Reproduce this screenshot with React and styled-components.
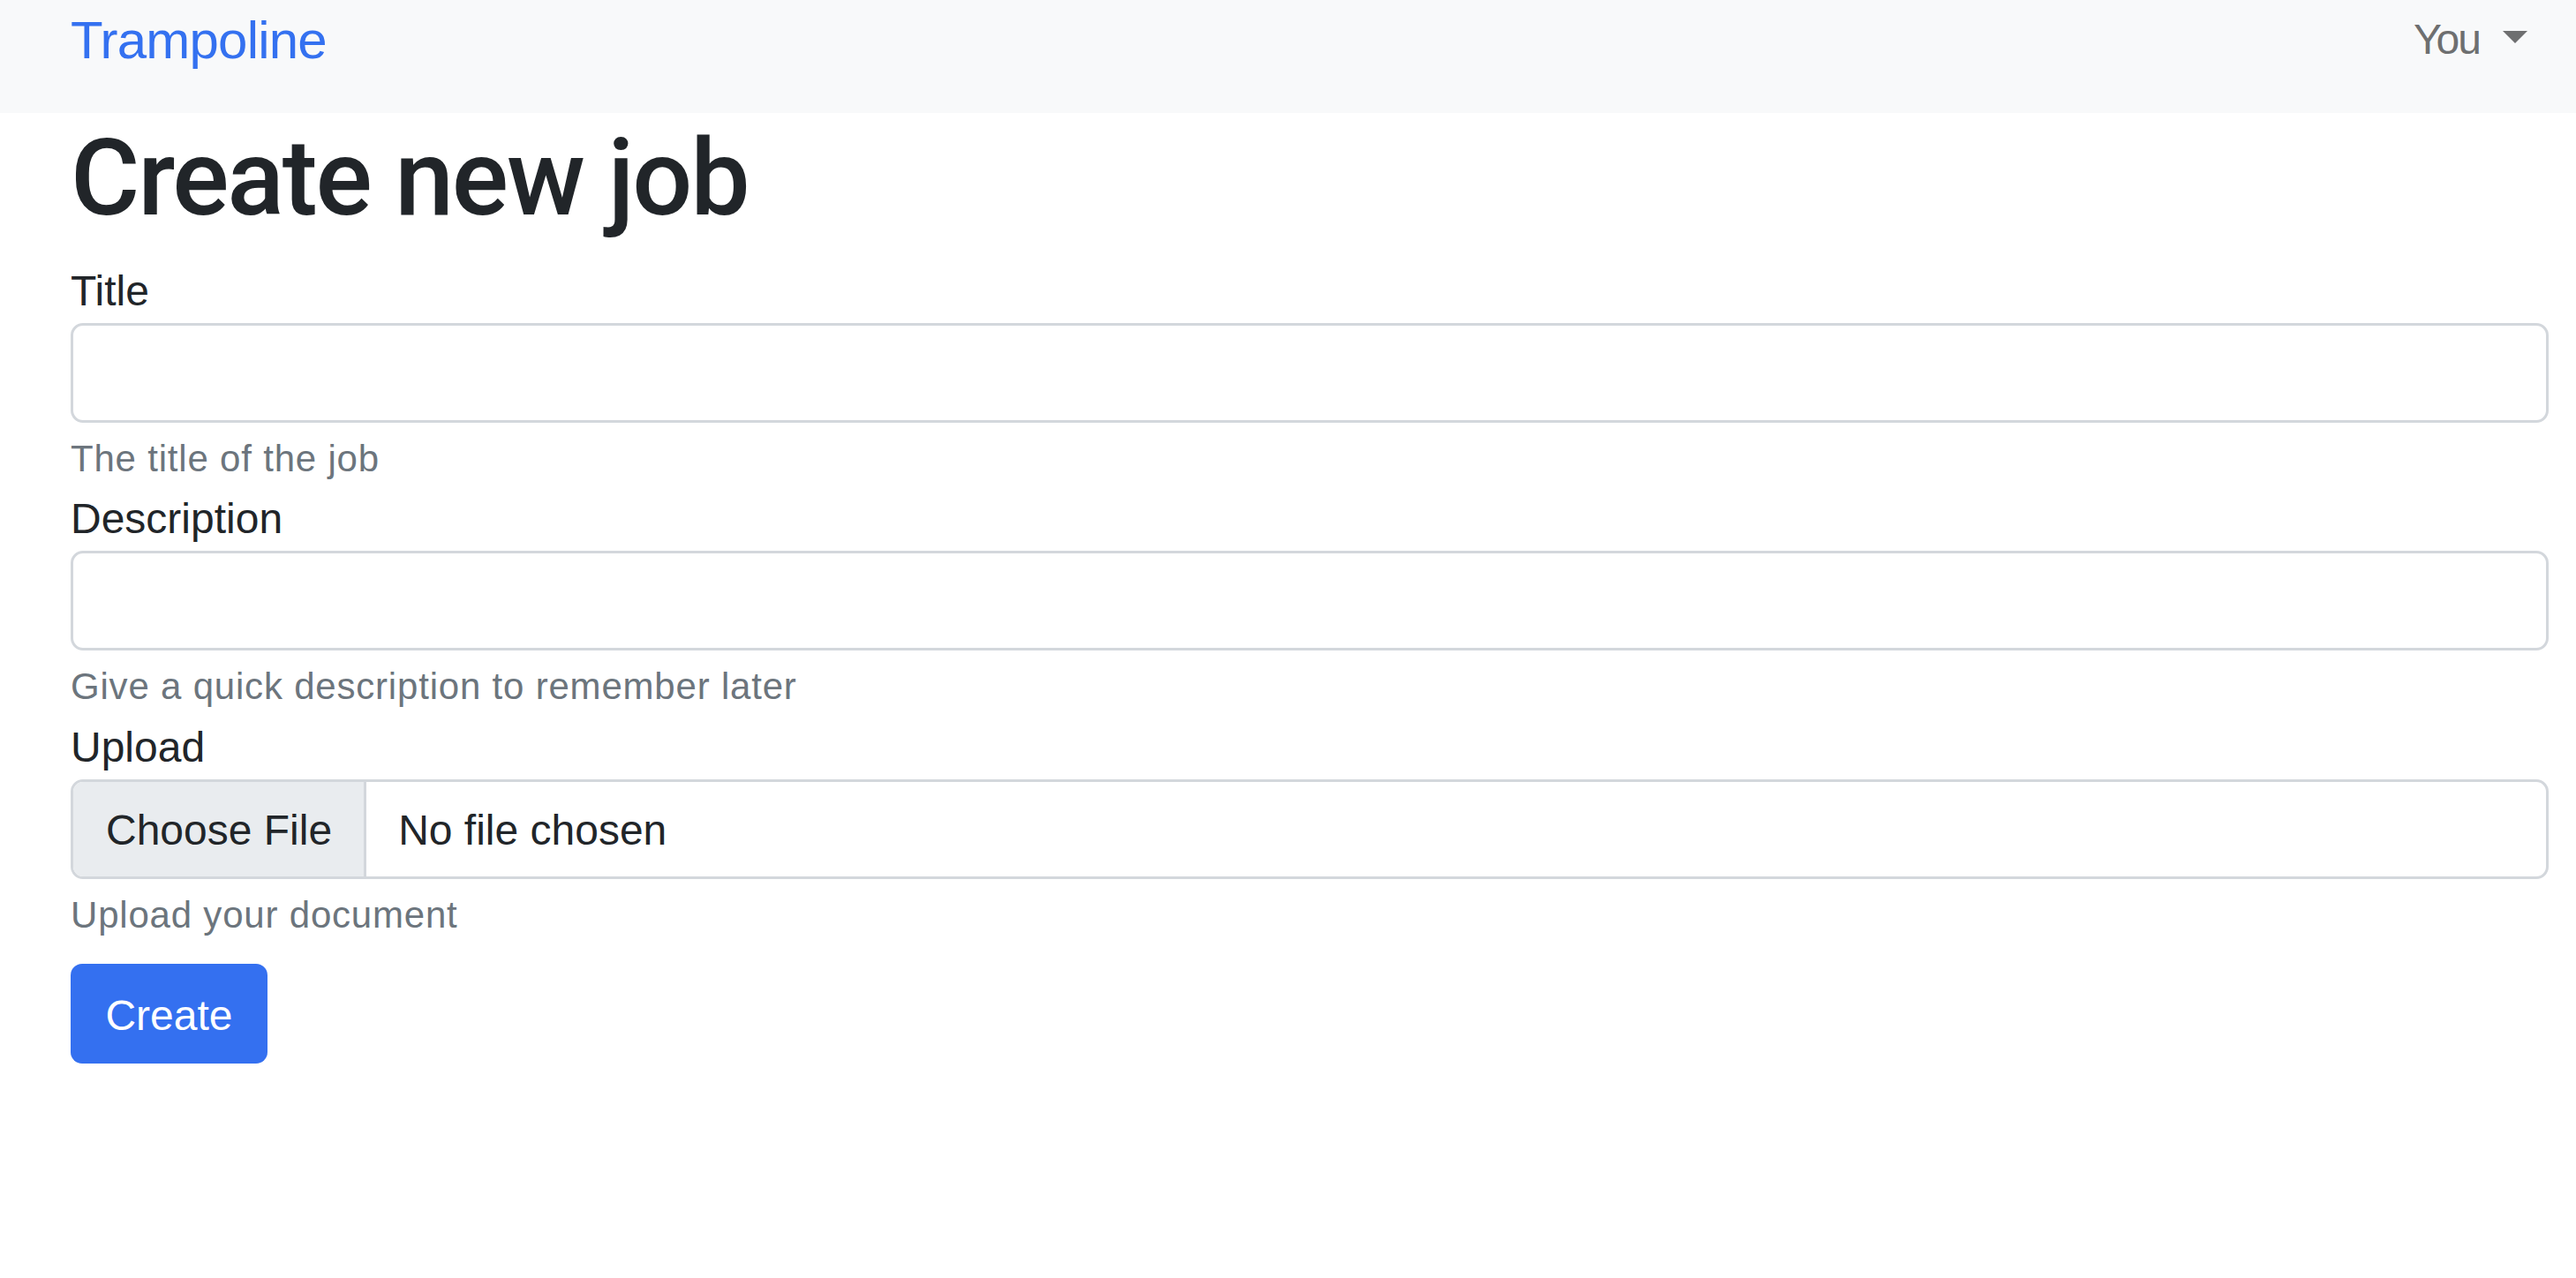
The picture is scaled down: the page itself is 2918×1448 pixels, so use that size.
import React from "react";
import styled, { createGlobalStyle } from "styled-components";

const GlobalStyle = createGlobalStyle`
    html, body {
        margin: 0;
        padding: 0;
        background: #fff;
    }
    body {
        font-family: "Liberation Sans", Arial, sans-serif;
        color: #212529;
    }
    * {
        box-sizing: border-box;
    }
`;

const fields = [
    { id: "title", label: "Title", help: "The title of the job" },
    { id: "description", label: "Description", help: "Give a quick description to remember later" },
];

export default function App() {
    return (
        <>
            <GlobalStyle />
            <Navbar>
                <Brand href="#">Trampoline</Brand>
                <UserToggle>You</UserToggle>
            </Navbar>
            <Main>
                <Heading>Create new job</Heading>
                <Form onSubmit={(e) => e.preventDefault()}>
                    {fields.map((f) => (
                        <Group key={f.id}>
                            <Label htmlFor={f.id}>{f.label}</Label>
                            <TextInput id={f.id} type="text" />
                            <Help>{f.help}</Help>
                        </Group>
                    ))}
                    <Group>
                        <Label htmlFor="upload">Upload</Label>
                        <FileBox htmlFor="upload">
                            <HiddenFile id="upload" type="file" />
                            <FileButton>Choose File</FileButton>
                            <FileName>No file chosen</FileName>
                        </FileBox>
                        <Help>Upload your document</Help>
                    </Group>
                    <SubmitButton type="submit">Create</SubmitButton>
                </Form>
            </Main>
        </>
    );
}

const Navbar = styled.nav`
    display: flex;
    justify-content: space-between;
    align-items: flex-start;
    height: 128px;
    padding: 0 55px 0 80px;
    background: #f8f9fa;
`;

const Brand = styled.a`
    font-size: 60px;
    line-height: 90px;
    letter-spacing: -0.8px;
    color: #3471f0;
    text-decoration: none;
    padding-top: 1px;
`;

const UserToggle = styled.span`
    display: inline-block;
    padding-top: 9px;
    font-size: 48px;
    line-height: 72px;
    letter-spacing: -2px;
    color: #6e6f70;
    cursor: pointer;

    &::after {
        content: "";
        display: inline-block;
        margin-left: 26px;
        vertical-align: 0.255em;
        border-top: 14px solid #6e6f70;
        border-left: 14px solid transparent;
        border-right: 14px solid transparent;
    }
`;

const Main = styled.main`
    padding: 0 31px 40px 80px;
`;

const Heading = styled.h1`
    margin: 2px 0 20px;
    font-family: Roboto, "Liberation Sans", sans-serif;
    font-size: 120px;
    line-height: 144px;
    font-weight: 500;
    letter-spacing: -2.2px;
    color: #212529;
`;

const Form = styled.form`
    display: flex;
    flex-direction: column;
    align-items: stretch;
`;

const Group = styled.div`
    display: flex;
    flex-direction: column;
    margin-bottom: 1.4px;
`;

const Label = styled.label`
    font-size: 48px;
    line-height: 72px;
    color: #212529;
`;

const TextInput = styled.input`
    display: block;
    width: 100%;
    height: 113px;
    padding: 18px 36px;
    font-family: inherit;
    font-size: 48px;
    color: #212529;
    background: #fff;
    border: 3px solid #d3d7dc;
    border-radius: 14px;
    outline: none;
`;

const Help = styled.div`
    margin-top: 9px;
    font-size: 42px;
    line-height: 63px;
    letter-spacing: 0.8px;
    color: #6c757d;
`;

const FileBox = styled.label`
    display: flex;
    align-items: stretch;
    height: 113px;
    border: 3px solid #d3d7dc;
    border-radius: 14px;
    overflow: hidden;
    background: #fff;
    cursor: pointer;
`;

const HiddenFile = styled.input`
    display: none;
`;

const FileButton = styled.span`
    display: flex;
    align-items: center;
    padding: 3px 36px 0 37px;
    font-size: 48px;
    color: #212529;
    background: #e9ecef;
    border-right: 3px solid #d3d7dc;
`;

const FileName = styled.span`
    display: flex;
    align-items: center;
    padding: 3px 36px 0 36px;
    font-size: 48px;
    color: #212529;
`;

const SubmitButton = styled.button`
    align-self: flex-start;
    margin-top: 23px;
    width: 223px;
    height: 113px;
    padding: 5px 0 0;
    font-family: inherit;
    font-size: 48px;
    line-height: 72px;
    color: #fff;
    background: #3470f0;
    border: none;
    border-radius: 13px;
    cursor: pointer;
`;
